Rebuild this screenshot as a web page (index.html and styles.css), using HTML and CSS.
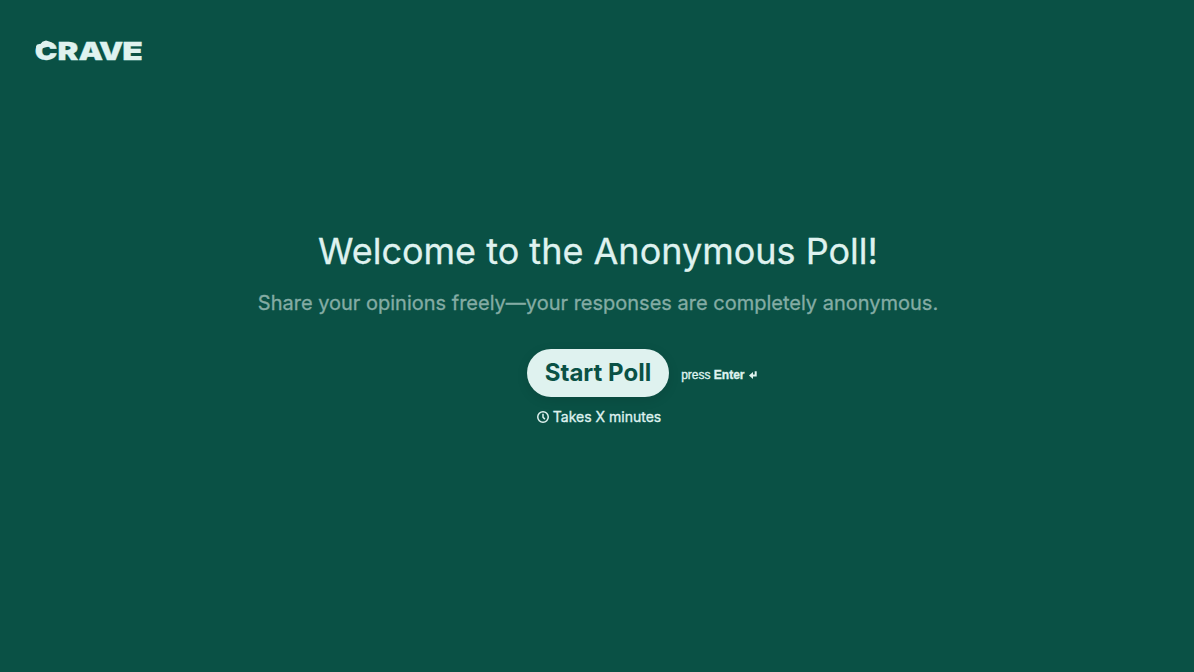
FILE: index.html
```html
<!DOCTYPE html>
<html lang="en">

<head>
	<meta charset="UTF-8">
	<meta name="viewport" content="width=device-width,initial-scale=1">
	<title>Anonymous Poll</title>
	<link rel="stylesheet" href="styles.css">
</head>

<body>

	<header class="header">
		<svg class="logo" width="114" height="36" viewBox="0 -6 114 36" role="img" aria-label="Crave">
			<g class="wordmark">
				<text transform="translate(0.8 20.8) scale(1.21 1)">C</text>
				<text transform="translate(23.4 20.8) scale(1.25 1)">R</text>
				<text transform="translate(44.4 20.8) scale(1.24 1)">A</text>
				<text transform="translate(65 20.8) scale(1.22 1)">V</text>
				<text transform="translate(88.3 20.8) scale(1.34 1)">E</text>
			</g>
			<!-- bite on the C -->
			<path class="cut" d="M0 0H10L7.2 4.8L4.4 5L2.4 7.7L0 9Z"/>
			<path class="leaf" d="M2 7.6L3 5.4L6.4 5.6L8.4 2.8L12 1.6L16 2.8L19 4.8L15 7.6L7 9.4L2.4 11Z"/>
		</svg>
	</header>

	<main class="welcome">
		<h1>Welcome to the Anonymous Poll!</h1>
		<p class="subtitle">Share your opinions freely—your responses are completely anonymous.</p>

		<div class="action">
			<button class="start" type="button">Start Poll</button>
			<div class="hint">
				<span>press <strong>Enter</strong></span>
				<svg class="key" width="8" height="8" viewBox="0 0 8 8" aria-hidden="true">
					<path class="key-line" d="M6.7 0.3V4.4H3"/>
					<path class="key-head" d="M0 4.4L4 0.9V7.9Z"/>
				</svg>
			</div>
		</div>

		<div class="duration">
			<svg width="12" height="12" viewBox="0 0 12 12" aria-hidden="true">
				<circle cx="6" cy="6" r="5.25"/>
				<path d="M6 2.8V6.2L7.9 8.1"/>
			</svg>
			<span>Takes X minutes</span>
		</div>
	</main>

</body>

</html>
```

FILE: styles.css
```css
body {
	margin: 0;
	height: 672px;
	overflow: hidden;
	background-color: #0a5145;
	color: #dff2ef;
	font-family: Inter, sans-serif;
}

.header {
	height: 88px;
	padding: 33px 0 0 34px;
	box-sizing: border-box;
}

.logo {
	display: block;
	overflow: visible;
}

.wordmark {
	font-size: 25px;
	font-weight: 900;
	fill: #dff2ef;
	stroke: #dff2ef;
	stroke-width: 0.3;
}

.cut { fill: #0a5145; }
.leaf { fill: #dff2ef; }

.welcome {
	display: flex;
	flex-direction: column;
	align-items: center;
	padding: 139px 0 0 2px;
}

h1 {
	margin: 0;
	font-size: 36px;
	font-weight: 400;
	line-height: 48px;
	-webkit-text-stroke: 0.3px;
}

.subtitle {
	margin: 14px 0 0;
	font-size: 20px;
	line-height: 28px;
	color: #84aca4;
	-webkit-text-stroke: 0.3px;
}

.action {
	display: grid;
	grid-template-columns: 1fr auto 1fr;
	align-items: center;
	column-gap: 12px;
	width: 100%;
	margin-top: 32px;
}

.start {
	grid-column: 2;
	height: 48px;
	padding: 0 18px;
	border: 0;
	border-radius: 24px;
	background-color: #dff2ef;
	color: #0a5145;
	font: 700 24px/32px Inter, sans-serif;
	box-shadow: 0 3px 12px rgba(0, 0, 0, 0.1);
}

.hint {
	display: flex;
	align-items: center;
	gap: 4px;
	padding-top: 4px;
	font: 12px/16px "Liberation Sans", Arial, sans-serif;
	-webkit-text-stroke: 0.35px;
}

.key-line {
	fill: none;
	stroke: #dff2ef;
	stroke-width: 2;
}

.key-head { fill: #dff2ef; }

.duration {
	display: flex;
	align-items: center;
	gap: 4px;
	margin: 10px 0 0 2px;
	font-size: 14px;
	line-height: 20px;
	-webkit-text-stroke: 0.35px;
}

.duration svg {
	fill: none;
	stroke: #dff2ef;
	stroke-width: 1.5;
}
```
